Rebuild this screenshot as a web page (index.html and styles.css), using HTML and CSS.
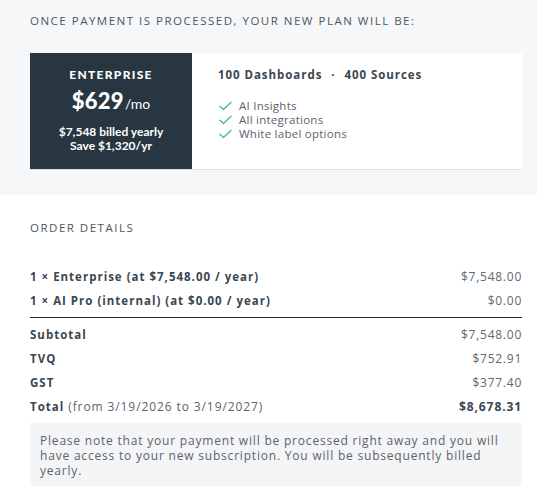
FILE: index.html
```html
<!DOCTYPE html>
<html>
<head>
<meta charset="utf-8">
<link rel="stylesheet" href="styles.css">
</head>
<body>
<section class="top">
  <div class="caption">ONCE PAYMENT IS PROCESSED, YOUR NEW PLAN WILL BE:</div>
  <div class="card">
    <div class="plan">
      <div class="plan-name">ENTERPRISE</div>
      <div class="plan-price"><span class="amount">$629</span><span class="per">/mo</span></div>
      <div class="plan-billed">$7,548 billed yearly<br>Save $1,320/yr</div>
    </div>
    <div class="features">
      <div class="limits">100 Dashboards <span class="dot">·</span> 400 Sources</div>
      <ul class="checks">
        <li><svg class="check" viewBox="0 0 14 10" width="13" height="10"><path d="M1 5.2 L4.8 8.8 L13 1" fill="none" stroke="#3dbb98" stroke-width="1.4" stroke-linecap="round" stroke-linejoin="round"/></svg>AI Insights</li>
        <li><svg class="check" viewBox="0 0 14 10" width="13" height="10"><path d="M1 5.2 L4.8 8.8 L13 1" fill="none" stroke="#3dbb98" stroke-width="1.4" stroke-linecap="round" stroke-linejoin="round"/></svg>All integrations</li>
        <li><svg class="check" viewBox="0 0 14 10" width="13" height="10"><path d="M1 5.2 L4.8 8.8 L13 1" fill="none" stroke="#3dbb98" stroke-width="1.4" stroke-linecap="round" stroke-linejoin="round"/></svg>White label options</li>
      </ul>
    </div>
  </div>
</section>
<section class="order">
  <div class="caption">ORDER DETAILS</div>
  <div class="items">
    <div class="row"><span class="label">1 × Enterprise (at $7,548.00 / year)</span><span class="value">$7,548.00</span></div>
    <div class="row"><span class="label">1 × AI Pro (internal) (at $0.00 / year)</span><span class="value">$0.00</span></div>
  </div>
  <div class="totals">
    <div class="row"><span class="label">Subtotal</span><span class="value">$7,548.00</span></div>
    <div class="row"><span class="label">TVQ</span><span class="value">$752.91</span></div>
    <div class="row"><span class="label">GST</span><span class="value">$377.40</span></div>
    <div class="row"><span class="label">Total <span class="range">(from 3/19/2026 to 3/19/2027)</span></span><span class="value strong">$8,678.31</span></div>
  </div>
  <div class="note">Please note that your payment will be processed right away and you will have access to your new subscription. You will be subsequently billed yearly.</div>
</section>
</body>
</html>
```
FILE: styles.css
```css
html, body {
  margin: 0;
  padding: 0;
  background: #ffffff;
}
body {
  font-family: "Open Sans", "DejaVu Sans", sans-serif;
  color: #3a4650;
  width: 537px;
}
.top {
  background: #f6f7f9;
  padding: 14px 15px 25px 30px;
}
.caption {
  font-size: 11.5px;
  line-height: 14px;
  letter-spacing: 1.5px;
  color: #4c5761;
}
.card {
  margin-top: 25px;
  display: flex;
  height: 116px;
  background: #ffffff;
  border-bottom: 1px solid #dde1e4;
}
.plan {
  width: 162px;
  background: #273640;
  color: #ffffff;
  text-align: center;
  padding-top: 13px;
  box-sizing: border-box;
  font-family: "Lato", "Open Sans", sans-serif;
}
.plan-name {
  font-weight: 900;
  font-size: 12px;
  line-height: 18px;
  letter-spacing: 1.3px;
}
.plan-price {
  margin-top: 5px;
  line-height: 24px;
}
.amount {
  font-size: 22px;
  font-weight: 900;
  letter-spacing: 0.3px;
}
.per {
  font-size: 14px;
  margin-left: 1px;
}
.plan-billed {
  margin-top: 9px;
  font-size: 12px;
  line-height: 13.5px;
  font-weight: 700;
}
.features {
  padding: 14px 0 0 26px;
}
.limits {
  font-weight: 700;
  font-size: 11.5px;
  line-height: 16px;
  letter-spacing: 0.95px;
  color: #3a4650;
}
.dot {
  margin: 0 5px;
}
.checks {
  list-style: none;
  margin: 16px 0 0 0;
  padding: 0;
}
.checks li {
  display: flex;
  align-items: center;
  font-size: 11.5px;
  line-height: 14px;
  color: #5a646d;
  letter-spacing: 0.25px;
}
.check {
  margin: 0 7px 0 1px;
}
.order {
  padding: 25px 15px 0 30px;
}
.order .caption {
  line-height: 16px;
}
.items {
  margin-top: 29px;
  padding-bottom: 4px;
  border-bottom: 1px solid #1e2a33;
}
.totals {
  margin-top: 5px;
}
.row {
  display: flex;
  justify-content: space-between;
  height: 24px;
  line-height: 24px;
}
.label {
  font-weight: 700;
  font-size: 11.5px;
  letter-spacing: 1px;
  color: #3a4650;
}
.range {
  font-weight: 400;
  font-size: 12px;
  color: #5a646d;
  letter-spacing: 0.9px;
}
.value {
  font-size: 12px;
  color: #5e6870;
  letter-spacing: 0.75px;
}
.value.strong {
  font-weight: 700;
  color: #3a4650;
  letter-spacing: 0.9px;
}
.note {
  margin-top: 4px;
  background: #f4f5f7;
  padding: 10px 10px 8px 10px;
  font-size: 12px;
  line-height: 15px;
  color: #5a646d;
  letter-spacing: 0.8px;
}
```
